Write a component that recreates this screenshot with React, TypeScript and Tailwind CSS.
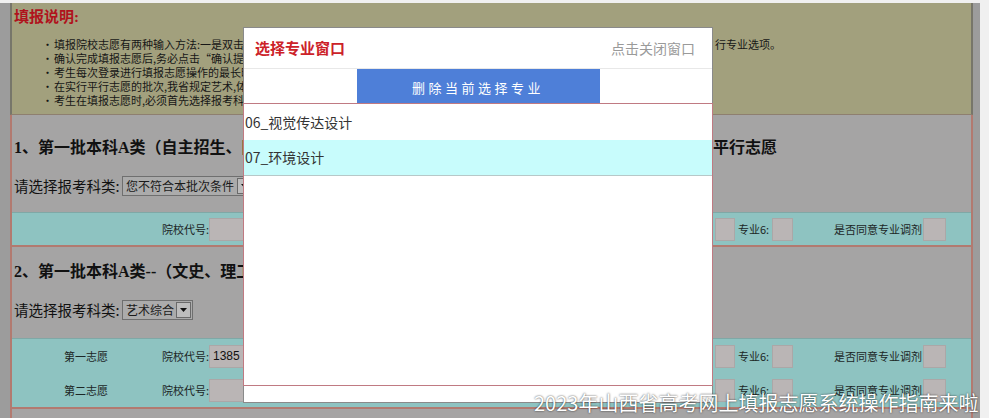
import React from "react";

function Box({ className = "", children }: { className?: string; children?: React.ReactNode }) {
  return (
    <div
      className={
        "h-[23px] shrink-0 bg-[#bab5b5] border border-[#aba7a7] text-[12px] leading-[21px] pl-[3px] font-['Liberation_Sans',sans-serif] text-[#111] " +
        className
      }
    >
      {children}
    </div>
  );
}

function RightCells() {
  return (
    <div className="flex items-center shrink-0">
      <Box className="w-[20px]" />
      <span className="w-[37px] pl-[3px] text-[11px] text-[#1c2626]">专业6:</span>
      <Box className="w-[21px]" />
      <span className="w-[130px] text-right pr-[1px] text-[11px] text-[#1c2626]">是否同意专业调剂</span>
      <Box className="w-[23px]" />
      <div className="w-[25px]" />
    </div>
  );
}

function TealRow({ name, code }: { name?: string; code?: string }) {
  return (
    <div className="flex items-center h-[34px] text-[#1c2626]">
      <span className="w-[148px] shrink-0 text-center text-[11px]">{name}</span>
      <span className="w-[49px] shrink-0 text-right text-[11px]">院校代号:</span>
      <Box className="w-[60px]">{code}</Box>
      <div className="flex-1" />
      <RightCells />
    </div>
  );
}

function Select({ text, width }: { text: string; width: string }) {
  return (
    <div className={"flex items-center h-[20px] border border-[#6f6f6f] bg-[#ababab] " + width}>
      <span className="pl-[3px] text-[12px] leading-[18px] text-[#1a1a1a] flex-1 whitespace-nowrap overflow-hidden">{text}</span>
      <span className="w-[15px] h-[16px] mr-[1px] border border-[#6a6a6a] bg-[#bdbdbd] flex items-center justify-center">
        <svg width="7" height="4" viewBox="0 0 7 4">
          <path d="M0 0 L7 0 L3.5 4 Z" fill="#111" />
        </svg>
      </span>
    </div>
  );
}

const bullets = [
  "确认完成填报志愿后,务必点击\u201c确认提交\u201d按钮，否则所填志愿无效。",
  "考生每次登录进行填报志愿操作的最长时间为60分钟。",
  "在实行平行志愿的批次,我省规定艺术,体育类专业按顺序志愿投档。",
  "考生在填报志愿时,必须首先选择报考科类后再填报。",
];

export default function App() {
  return (
    <div className="relative w-[989px] h-[418px] overflow-hidden bg-[#f0f0f0] pt-[3px] font-['Noto_Sans_CJK_SC',sans-serif]">
      <div className="w-[980px] h-[415px] bg-[#9c9c9c] pl-[10px] pr-[7px] overflow-hidden">
        <div className="w-[963px]">
          {/* notice */}
          <div className="h-[112px] bg-[#a2a07d] border-x-2 border-[#77766a] border-b border-b-[#8e7f6f] pt-[4px] pl-[2px] overflow-hidden">
            <div className="text-[15px] leading-[20px] font-bold text-[#b0121c] font-['Liberation_Serif','Noto_Sans_CJK_SC',serif]">
              填报说明:
            </div>
            <ul className="mt-[10px] ml-[28px] text-[11px] leading-[14px] text-[#161616]">
              <li className="flex whitespace-nowrap">
                <span className="w-[12px] shrink-0">•</span>
                <span className="inline-block w-[661px] shrink-0 overflow-hidden">
                  填报院校志愿有两种输入方法:一是双击院校代号输入框，在弹出的窗口中选择院校；二是直接输入院校代号，再在专业窗口中进
                </span>
                <span>行专业选项。</span>
              </li>
              {bullets.map((b) => (
                <li key={b} className="flex whitespace-nowrap">
                  <span className="w-[12px] shrink-0">•</span>
                  <span>{b}</span>
                </li>
              ))}
            </ul>
          </div>

          {/* section 1 */}
          <div className="bg-[#a5a4a4] border-x-2 border-b-2 border-[#b27a70] pt-[21px]">
            <div className="flex h-[24px] items-center pl-[2px] whitespace-nowrap text-[16px] font-bold text-[#111] font-['Liberation_Serif','Noto_Sans_CJK_SC',serif]">
              <span className="inline-block w-[699px] shrink-0 overflow-hidden">
                1、第一批本科A类（自主招生、国家专项、地方专项、高校专项）及第一批本科A类
              </span>
              <span>平行志愿</span>
            </div>
            <div className="mt-[14px] flex h-[24px] items-center pl-[2px]">
              <span className="text-[14.5px] whitespace-nowrap text-[#111] w-[108px] shrink-0">请选择报考科类:</span>
              <Select text="您不符合本批次条件" width="w-[132px]" />
            </div>
            <div className="mt-[14px] bg-[#8ec3c1] border-t border-[#7fa8a6]">
              <div className="h-[32px] flex items-center text-[#1c2626]">
                <span className="w-[148px] shrink-0" />
                <span className="w-[49px] shrink-0 text-right text-[11px]">院校代号:</span>
                <Box className="w-[60px]" />
                <div className="flex-1" />
                <RightCells />
              </div>
            </div>
          </div>

          {/* section 2 */}
          <div className="bg-[#a5a4a4] border-x-2 border-b-2 border-[#b27a70] pt-[13px]">
            <div className="flex h-[24px] items-center pl-[2px] whitespace-nowrap text-[16px] font-bold text-[#111] font-['Liberation_Serif','Noto_Sans_CJK_SC',serif]">
              2、第一批本科A类--（文史、理工、艺术、体育）
            </div>
            <div className="mt-[14px] flex h-[24px] items-center pl-[2px]">
              <span className="text-[14.5px] whitespace-nowrap text-[#111] w-[108px] shrink-0">请选择报考科类:</span>
              <Select text="艺术综合" width="w-[71px]" />
            </div>
            <div className="mt-[16px] bg-[#8ec3c1] border-t border-[#7fa8a6]">
              <TealRow name="第一志愿" code="1385" />
              <TealRow name="第二志愿" />
            </div>
          </div>

          <div className="h-[20px] bg-[#a5a4a4] border-x-2 border-[#b27a70]" />
        </div>
      </div>

      {/* dialog */}
      <div className="absolute left-[243px] top-[27px] w-[470px] h-[376px] bg-white border border-[#8a8a8a] flex flex-col">
        <div className="h-[41px] shrink-0 flex items-center justify-between pl-[11px] pr-[17px] border-b border-[#e8e8e8]">
          <span className="text-[15px] font-bold text-[#cc2229]">选择专业窗口</span>
          <span className="text-[14px] text-[#9a9a9a]">点击关闭窗口</span>
        </div>
        <div className="h-[34px] shrink-0 flex justify-center">
          <button className="w-[243px] h-full bg-[#4e7fd8] text-white text-[13px] tracking-[3.5px] pt-[3px]">
            删除当前选择专业
          </button>
        </div>
        <div className="h-[283px] shrink-0 border border-[#c07a82] -mx-[1px]">
          <div className="h-[36px] flex items-center pl-[1px] text-[14px] text-[#333]">06_视觉传达设计</div>
          <div className="h-[36px] flex items-center pl-[1px] text-[14px] text-[#333] bg-[#c8fcfc] border-b border-[#b7c8c8]">
            07_环境设计
          </div>
        </div>
      </div>

      {/* caption */}
      <div className="absolute left-[534px] top-[392px] whitespace-nowrap text-[20px] leading-[22px] text-white [text-shadow:0_0_2px_rgba(0,0,0,0.8)]">
        2023年山西省高考网上填报志愿系统操作指南来啦
      </div>
    </div>
  );
}
